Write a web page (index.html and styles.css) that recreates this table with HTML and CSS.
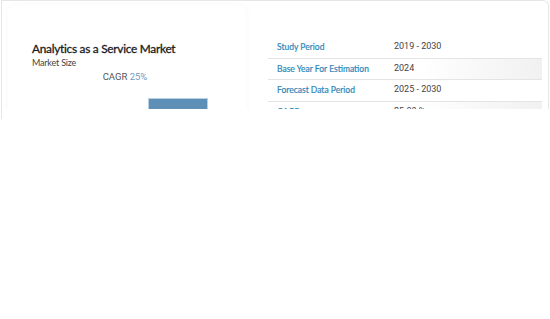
FILE: index.html
```html
<!DOCTYPE html>
<html>
<head>
<meta charset="utf-8">
<link rel="stylesheet" href="styles.css">
</head>
<body>
<div class="frame">
  <div class="card">
    <div class="left">
      <div class="panel">
        <h1 class="title">Analytics as a Service Market</h1>
        <div class="subtitle">Market Size</div>
        <div class="cagr">CAGR <span class="cagr-val">25%</span></div>
        <div class="chart">
          <div class="bar"></div>
        </div>
      </div>
    </div>
    <div class="right">
      <div class="table">
        <div class="row"><span class="label">Study Period</span><span class="value">2019 - 2030</span></div>
        <div class="row shade"><span class="label">Base Year For Estimation</span><span class="value">2024</span></div>
        <div class="row"><span class="label">Forecast Data Period</span><span class="value">2025 - 2030</span></div>
        <div class="row shade"><span class="label">CAGR</span><span class="value">25.00 %</span></div>
      </div>
    </div>
  </div>
</div>
</body>
</html>
```
FILE: styles.css
```css
html, body {
  margin: 0;
  padding: 0;
  background: #fff;
}
body {
  font-family: Lato, "Noto Sans", sans-serif;
  width: 550px;
  height: 319px;
}
.frame {
  margin-left: 1px;
  height: 119px;
  border-left: 1px solid #e6e6e6;
}
.card {
  height: 109px;
  width: 547px;
  box-sizing: border-box;
  border-top: 1px solid #e6e6e6;
  border-right: 1px solid #e6e6e6;
  border-top-right-radius: 6px;
  overflow: hidden;
  display: flex;
}
.left {
  width: 266px;
  flex: none;
  padding: 4px 0 0 6px;
  box-sizing: border-box;
}
.panel {
  width: 238px;
  height: 130px;
  box-sizing: border-box;
  border-radius: 8px;
  box-shadow: 0 0 6px rgba(0,0,0,0.035);
  padding: 36px 0 0 24px;
}
.title {
  margin: 0;
  font-size: 11.8px;
  line-height: 16px;
  font-weight: 400;
  color: #1a1a1a;
  -webkit-text-stroke: 0.3px #1a1a1a;
  letter-spacing: -0.25px;
}
.subtitle {
  font-size: 9px;
  line-height: 12px;
  color: #444;
  letter-spacing: -0.2px;
}
.cagr {
  font-family: Roboto, "Open Sans", sans-serif;
  font-size: 9.5px;
  line-height: 12px;
  color: #555;
  text-align: center;
  margin-top: 2px;
  padding-right: 28px;
}
.cagr-val {
  color: #6d9cc0;
}
.chart {
  margin-top: 16px;
  display: flex;
}
.bar {
  margin-left: 117px;
  width: 58px;
  height: 11px;
  background: #5e8fb6;
  box-shadow: 0 0 0 1px #b7d0e3;
}
.right {
  flex: 1;
  padding-top: 36px;
}
.table {
  width: 274px;
}
.row {
  display: flex;
  align-items: center;
  height: 21.5px;
  border-bottom: 1px solid #e4e4e4;
  box-sizing: border-box;
}
.row.shade {
  background: linear-gradient(to right, #fff 0%, #fff 55%, #f1f1f1 100%);
}
.label {
  width: 126px;
  padding-left: 9px;
  box-sizing: border-box;
  font-size: 8.5px;
  font-weight: 400;
  color: #2e87b8;
  -webkit-text-stroke: 0.2px #2e87b8;
  flex: none;
}
.value {
  font-family: Roboto, "Open Sans", sans-serif;
  font-size: 9px;
  color: #444;
  margin-top: -2px;
}
```
